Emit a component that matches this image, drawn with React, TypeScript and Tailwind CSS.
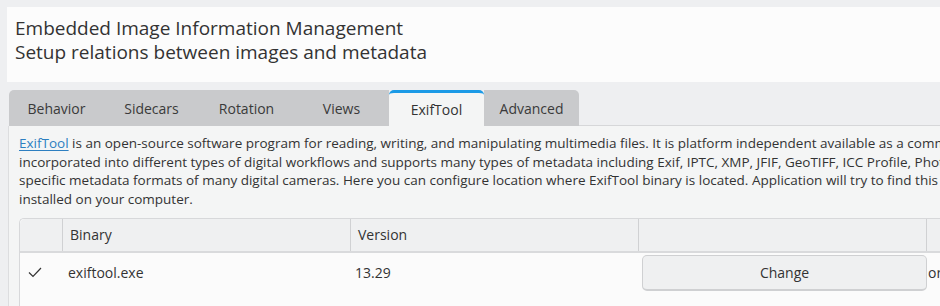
import React from "react";

const tabs = ["Behavior", "Sidecars", "Rotation", "Views", "ExifTool", "Advanced"];

const CheckMark = () => (
  <svg width="14" height="11" viewBox="0 0 14 11" fill="none">
    <path d="M1 5.5 L5 9.5 L13 1" stroke="#333" strokeWidth="1.2" />
  </svg>
);

const App = () => {
  return (
    <div className="w-[940px] h-[306px] overflow-hidden bg-[#eeeff1] text-[#333] font-['Open_Sans',sans-serif]">
      {/* Header */}
      <div className="pt-[7px] pl-[7px]">
        <div className="h-[75px] bg-[#fcfcfc] pl-[8px] pt-[9px] text-[19px] leading-[24px] whitespace-nowrap">
          <div>Embedded Image Information Management</div>
          <div>Setup relations between images and metadata</div>
        </div>
      </div>

      {/* Tabs */}
      <div className="mt-[8px] ml-[9px] flex">
        {tabs.map((t, i) => {
          const active = t === "ExifTool";
          return (
            <div
              key={t}
              className={
                "w-[95px] h-[36px] flex items-center justify-center text-[14px] " +
                (active
                  ? "bg-[#f4f5f5] border-t-[3px] border-[#1b9ae6] rounded-t-[5px] pb-[1px]"
                  : "bg-[#c9cacc] text-[#3a3a3a]") +
                (i === 0 ? " rounded-tl-[5px]" : "") +
                (i === tabs.length - 1 ? " rounded-tr-[5px]" : "")
              }
            >
              {t}
            </div>
          );
        })}
        <div className="flex-1 border-b border-[#d6d7d9]" />
      </div>

      {/* Content */}
      <div className="ml-[8px] h-[200px] bg-[#f4f5f5] border-l border-[#dcdddf] pl-[10px] pt-[8px]">
        <div className="text-[13.5px] leading-[18.7px] whitespace-nowrap overflow-hidden">
          <div>
            <span className="text-[#2d7fc1] underline underline-offset-2">ExifTool</span> is an open-source software
            program for reading, writing, and manipulating multimedia files. It is platform independent available as a
            command-line application
          </div>
          <div>
            incorporated into different types of digital workflows and supports many types of metadata including Exif,
            IPTC, XMP, JFIF, GeoTIFF, ICC Profile, Photoshop IRB, FlashPix
          </div>
          <div>
            specific metadata formats of many digital cameras. Here you can configure location where ExifTool binary is
            located. Application will try to find this binary automatically
          </div>
          <div>installed on your computer.</div>
        </div>

        {/* Table */}
        <div className="mt-[9px] w-[960px] bg-[#fbfbfb] border-l border-t border-[#d7d8da] rounded-tl-[5px] text-[14px]">
          <div className="flex h-[34px] bg-[#eff0f1] border-b-2 border-[#d9dadc] rounded-tl-[5px]">
            <div className="w-[43px] border-r border-[#d0d1d3]" />
            <div className="w-[288px] border-r border-[#d0d1d3] flex items-center pl-[7px]">Binary</div>
            <div className="w-[288px] border-r border-[#d0d1d3] flex items-center pl-[7px]">Version</div>
            <div className="w-[288px] border-r border-[#d0d1d3]" />
            <div className="flex-1" />
          </div>
          <div className="flex h-[54px] pt-[1px]">
            <div className="w-[43px] h-[38px] flex items-center pl-[8px]">
              <CheckMark />
            </div>
            <div className="w-[288px] h-[38px] flex items-center pl-[5px]">exiftool.exe</div>
            <div className="w-[288px] h-[38px] flex items-center pl-[4px]">13.29</div>
            <div className="w-[288px] h-[38px] flex items-center pl-[3px]">
              <button className="w-[285px] h-[36px] bg-[#eff0f1] border border-[#cfd0d2] border-b-2 rounded-[5px] text-[14px] text-[#333]">
                Change
              </button>
            </div>
            <div className="h-[38px] flex items-center pl-[1px]">or</div>
          </div>
        </div>
      </div>
    </div>
  );
};

export default App;
